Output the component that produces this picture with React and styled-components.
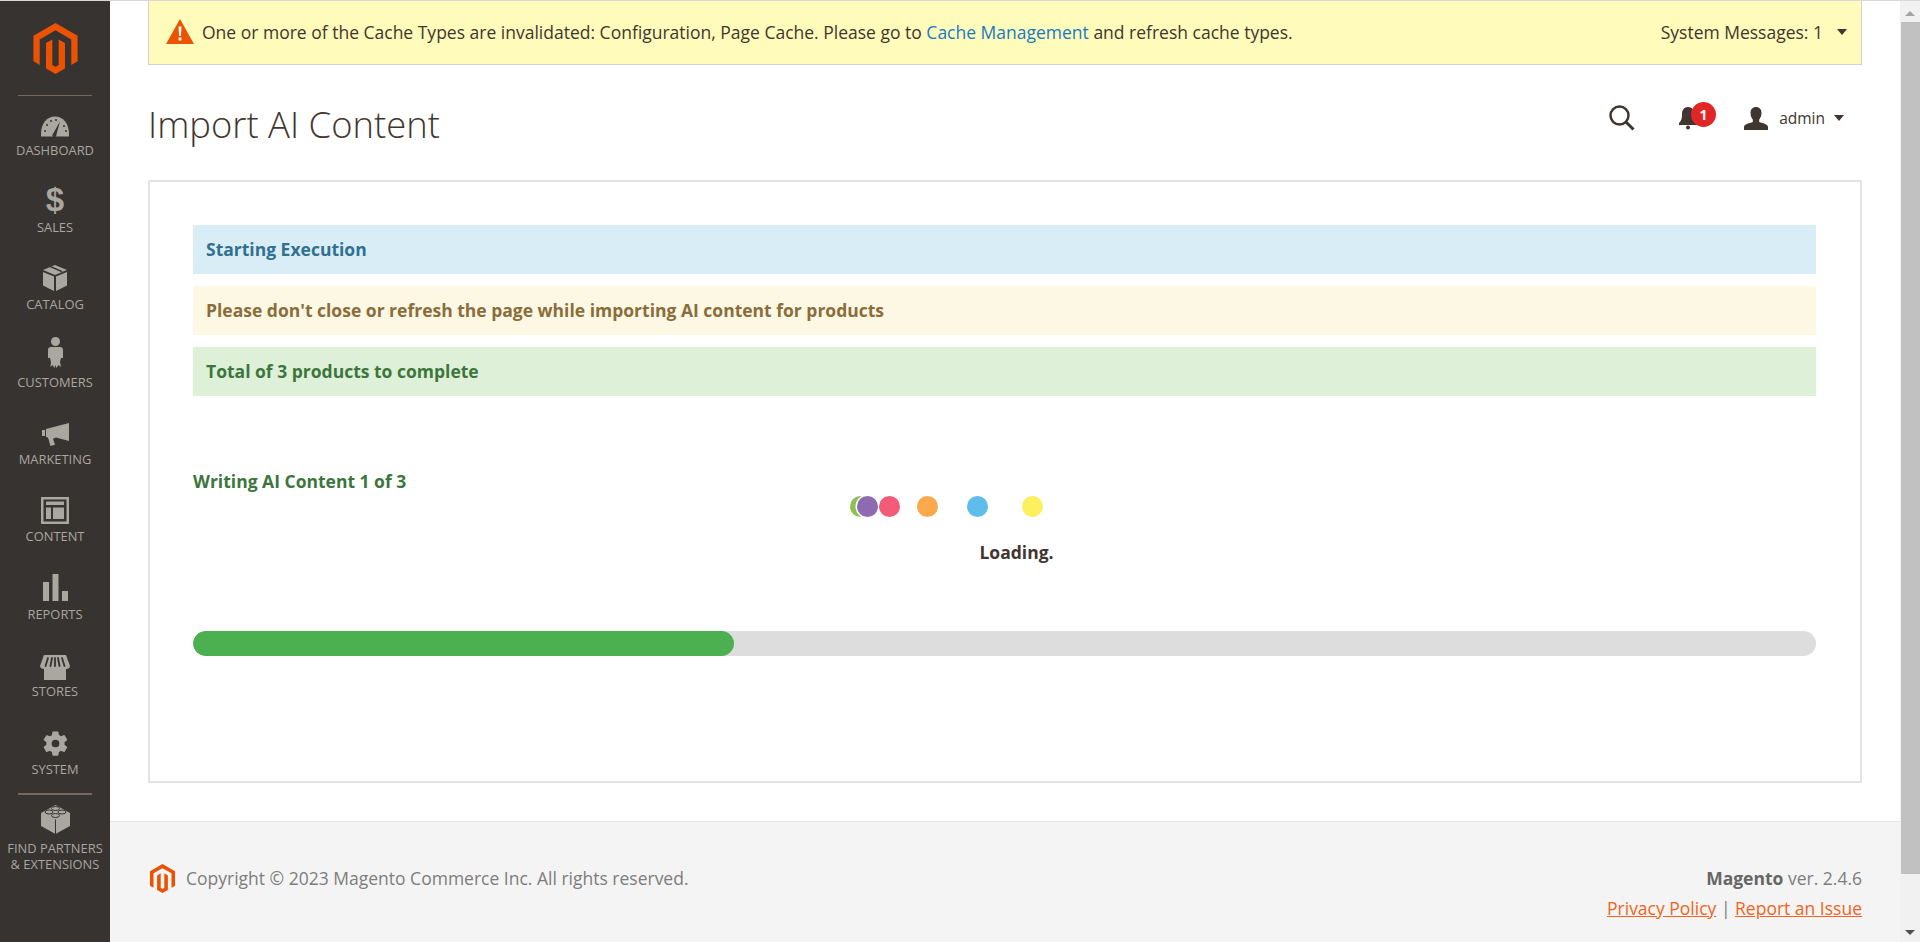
import React from 'react';
import styled, { createGlobalStyle } from 'styled-components';
import { SiMagento } from 'react-icons/si';

const iconColor = '#aaa6a0';
const sidebarColor = '#373330';

const GlobalStyle = createGlobalStyle`
  html, body {
    margin: 0;
    padding: 0;
    height: 100%;
    overflow: hidden;
    background: #fff;
    font-family: "Open Sans", "Noto Sans", sans-serif;
  }
`;

const Page = styled.div`
  display: flex;
  height: 942px;
  box-sizing: border-box;
  border-top: 1px solid #d9d9d9;
`;

/* sidebar */
const Sidebar = styled.nav`
  flex: 0 0 110px;
  background: ${sidebarColor};
  display: flex;
  flex-direction: column;
`;
const LogoBox = styled.div`
  height: 94px;
  display: flex;
  align-items: flex-start;
  justify-content: center;
  padding-top: 22px;
  box-sizing: border-box;
  color: #eb5202;
  font-size: 51px;
  line-height: 0;
`;
const Divider = styled.div`
  height: ${p => p.$thick}px;
  margin: 0 18px;
  background: #736963;
  flex: none;
`;
const NavItem = styled.a`
  height: 77.4px;
  flex: none;
  box-sizing: border-box;
  padding-top: 11.5px;
  display: flex;
  flex-direction: column;
  align-items: center;
  color: ${iconColor};
  font-size: 12.9px;
  line-height: 16px;
  text-align: center;
  white-space: nowrap;
`;
const NavIcon = styled.div`
  height: 34px;
  margin-top: ${p => p.$shift}px;
  margin-bottom: ${p => -p.$shift}px;
  display: flex;
  align-items: center;
  justify-content: center;
  flex: none;
  svg { fill: ${iconColor}; display: block; }
`;
const DollarGlyph = styled.span`
  font-family: "Liberation Sans", sans-serif;
  font-weight: 700;
  font-size: 33px;
  line-height: 34px;
  color: ${iconColor};
`;

/* main column */
const Main = styled.div`
  flex: 1;
  min-width: 0;
  display: flex;
  flex-direction: column;
`;
const Content = styled.div`
  flex: 1;
  padding: 0 38px;
  display: flex;
  flex-direction: column;
`;
const Notice = styled.div`
  height: 64px;
  box-sizing: border-box;
  background: #fffbbb;
  border: 1px solid #d1d1d1;
  border-top: none;
  display: flex;
  align-items: center;
  padding: 0 14px 2px 17px;
  font-size: 17.5px;
  color: #41362f;
  flex: none;
`;
const NoticeText = styled.div`
  flex: 1;
  margin-left: 8px;
  a { color: #1979c3; text-decoration: none; }
`;
const NoticeToggle = styled.div`
  display: flex;
  align-items: center;
  gap: 14px;
`;
const Caret = styled.span`
  width: 0;
  height: 0;
  border-style: solid;
  border-width: 6px 5px 0;
  border-color: #41362f transparent transparent;
`;
const Header = styled.header`
  height: 115px;
  flex: none;
  display: flex;
  align-items: center;
  justify-content: space-between;
`;
const Title = styled.h1`
  margin: 3px 0 0;
  font-weight: 300;
  font-size: 36.4px;
  line-height: 44px;
  color: #41362f;
`;
const Actions = styled.div`
  display: flex;
  align-items: center;
  margin: 0 18px 9px 0;
  color: #41362f;
`;
const Bell = styled.div`
  position: relative;
  margin-left: 43px;
  width: 18px;
  height: 24px;
  svg { display: block; }
`;
const Badge = styled.span`
  position: absolute;
  left: 13px;
  top: -4px;
  width: 25px;
  height: 25px;
  border-radius: 50%;
  background: #e22626;
  color: #fff;
  font-size: 14px;
  font-weight: 700;
  line-height: 25px;
  text-align: center;
`;
const UserIcon = styled.svg`
  margin-left: 48px;
  fill: #41362f;
`;
const UserName = styled.span`
  margin-left: 11px;
  font-size: 15.5px;
  margin-right: 9px;
`;

/* progress panel */
const Panel = styled.section`
  height: 603px;
  flex: none;
  box-sizing: border-box;
  border: 2px solid #e3e3e3;
  padding: 43px 44px 0 43px;
  display: flex;
  flex-direction: column;
`;
const Alert = styled.div`
  height: 49px;
  flex: none;
  box-sizing: border-box;
  display: flex;
  align-items: center;
  padding: 0 0 2px 13px;
  margin-bottom: 12px;
  font-size: 17.5px;
  font-weight: 700;
  color: ${p => p.$color};
  background: ${p => p.$bg};
`;
const Writing = styled.div`
  margin-top: 61px;
  font-size: 17.5px;
  font-weight: 700;
  line-height: 24px;
  color: #3c763d;
`;
const Dots = styled.div`
  display: flex;
  margin: 3px 0 0 657px;
`;
const Dot = styled.span`
  width: 21px;
  height: 21px;
  flex: none;
  border-radius: 50%;
  background: ${p => p.$color};
  margin-left: ${p => p.$gap}px;
  box-shadow: ${p => (p.$ring ? '0 0 0 1.5px #fff' : 'none')};
`;
const Loading = styled.div`
  margin-top: 23px;
  padding-left: 24px;
  text-align: center;
  font-size: 17.5px;
  font-weight: 700;
  line-height: 24px;
  color: #41362f;
`;
const Track = styled.div`
  margin-top: 67px;
  height: 25px;
  border-radius: 13px;
  background: #ddd;
  overflow: hidden;
`;
const Fill = styled.div`
  width: 541px;
  height: 100%;
  border-radius: 13px;
  background: #4caf50;
`;

/* footer */
const Footer = styled.footer`
  height: 121px;
  flex: none;
  box-sizing: border-box;
  background: #f4f4f4;
  border-top: 1px solid #e3e3e3;
  padding: 40.5px 38px 0;
  display: flex;
  justify-content: space-between;
  font-size: 17.5px;
  line-height: 30px;
  color: #7d7d7d;
`;
const Copyright = styled.div`
  display: flex;
  align-items: flex-start;
  gap: 9px;
  svg { color: #eb5202; display: block; margin-top: 1px; }
`;
const FooterRight = styled.div`
  text-align: right;
  b { font-weight: 700; color: #666; }
  a { color: #f26322; text-decoration: underline; }
`;

/* browser scrollbar */
const Scrollbar = styled.div`
  flex: 0 0 20px;
  background: #f1f1f1;
  display: flex;
  flex-direction: column;
  align-items: center;
`;
const ScrollArrow = styled.div`
  height: 21px;
  flex: none;
  box-sizing: border-box;
  display: flex;
  align-items: flex-start;
  padding-top: ${p => (p.$down ? 9 : 10)}px;
  &::before {
    content: '';
    border-style: solid;
    border-color: transparent;
    border-width: ${p => (p.$down ? '5px 5px 0' : '0 5px 5px')};
    border-top-color: ${p => (p.$down ? '#505050' : 'transparent')};
    border-bottom-color: ${p => (p.$down ? 'transparent' : '#a3a3a3')};
  }
`;
const Thumb = styled.div`
  width: 19px;
  height: 852px;
  flex: none;
  background: #c1c1c1;
  margin-bottom: auto;
  margin-left: 1px;
`;

const GaugeIcon = () => (
  <svg width="28" height="21" viewBox="0 0 28 21">
    <path d="M0 20.5V18C0 7.5 6 .5 14 .5S28 7.5 28 18v2.5z" />
    <path d="M12.2 17.6 19 5.5l-3.6 13.3a2 2 0 1 1-3.2-1.2z" fill={sidebarColor} />
    <g fill={sidebarColor}>
      <circle cx="4" cy="15" r="1" />
      <circle cx="6" cy="9" r="1" />
      <circle cx="10" cy="5" r="1" />
      <circle cx="15" cy="4" r="1" />
      <circle cx="23" cy="10" r="1" />
      <circle cx="25" cy="15" r="1" />
    </g>
  </svg>
);

const BoxIcon = () => (
  <svg width="24" height="26" viewBox="0 0 24 26">
    <path d="M12 0 24 5 12 10 0 5z" />
    <path d="M0 7 11 11.5V26L0 20.5z" />
    <path d="M24 7 13 11.5V26l11-5.500z" />
    <path d="M6.500 2 18 7l2-.8L8.500 1.200z" fill={sidebarColor} />
  </svg>
);

const PersonIcon = () => (
  <svg width="15" height="31" viewBox="0 0 15 31">
    <circle cx="7.500" cy="4.500" r="4.500" />
    <path d="M3 10h9c2 0 3 1 3 3v8h-2l-1 4 1 5-2.500-2-2 3-1-3-1 3-2-3L2.500 30 3 25l-1-4H0v-8c0-2 1-3 3-3z" />
  </svg>
);

const MegaphoneIcon = () => (
  <svg width="27" height="23" viewBox="0 0 27 23">
    <path d="M0 7h3v6H0z" />
    <path d="M4 6 27 0v18l-13-3.500-3 1.200 2 6L8.500 23 6 14.500 4 14z" />
  </svg>
);

const ContentIcon = () => (
  <svg width="28" height="27" viewBox="0 0 28 27">
    <path fillRule="evenodd" d="M0 0h28v27H0zM2.500 2.500v22h23v-22z" />
    <path d="M5 4.500h18v3.500H5zM5 10.500h5V22H5zM12 10.500h11V22H12z" />
  </svg>
);

const BarsIcon = () => (
  <svg width="25" height="27" viewBox="0 0 25 27">
    <path d="M0 8h6v19H0zM9.500 0h6v27h-6zM19 17h6v10h-6z" />
  </svg>
);

const StoreIcon = () => (
  <svg width="30" height="25" viewBox="0 0 30 25">
    <path d="M4 0h22l4 11c0 2-2 3-3.500 3l-.5 0V25H4V14C2 14 0 13 0 11z" />
    <path
      d="M8 3 5.500 11M12 3l-1.500 8M15 3v8M18 3l1.500 8M22 3l2.500 8"
      stroke={sidebarColor}
      strokeWidth="1.800"
      strokeLinecap="round"
    />
  </svg>
);

const GearIcon = () => (
  <svg width="29" height="29" viewBox="0 0 24 24">
    <path d="M19.400 13c.05-.33.1-.66.1-1s-.05-.67-.1-1l2.100-1.650a.5.5 0 0 0 .12-.64l-2-3.460a.5.5 0 0 0-.61-.22l-2.490 1a7.300 7.300 0 0 0-1.730-1l-.38-2.650A.49.49 0 0 0 13.920 2h-4a.49.49 0 0 0-.49.42l-.38 2.650c-.61.25-1.170.59-1.690 1l-2.490-1a.5.5 0 0 0-.61.22l-2 3.460a.5.5 0 0 0 .12.64L4.500 11c-.05.33-.08.66-.08 1s.03.67.08 1l-2.110 1.650a.5.5 0 0 0-.12.64l2 3.460c.12.22.39.3.61.22l2.490-1c.52.4 1.080.74 1.690 1l.38 2.650c.05.24.24.42.49.42h4c.25 0 .45-.18.49-.42l.38-2.650c.61-.26 1.170-.6 1.690-1l2.490 1c.23.08.49 0 .61-.22l2-3.460a.5.5 0 0 0-.12-.64zM12 15.200a3.200 3.200 0 1 1 0-6.400 3.200 3.200 0 0 1 0 6.400z" />
  </svg>
);

const BlocksIcon = () => (
  <svg width="29" height="29" viewBox="0 0 29 29">
    <path d="M14.500 0 29 8v13l-14.500 8L0 21V8z" />
    <path d="M14.500 14.500v14.500" stroke={sidebarColor} strokeWidth="1" fill="none" />
    <g fill="#aaa6a0" stroke={sidebarColor} strokeWidth="1">
      <ellipse cx="14.500" cy="3.500" rx="4" ry="2" />
      <ellipse cx="8" cy="7" rx="4" ry="2" />
      <ellipse cx="21" cy="7" rx="4" ry="2" />
      <ellipse cx="14.500" cy="10.500" rx="4" ry="2" />
    </g>
  </svg>
);

const navItems = [
  { label: 'DASHBOARD', shift: 1.5, icon: <GaugeIcon /> },
  { label: 'SALES', shift: -1.5, icon: <DollarGlyph>$</DollarGlyph> },
  { label: 'CATALOG', shift: -1, icon: <BoxIcon /> },
  { label: 'CUSTOMERS', shift: -4, icon: <PersonIcon /> },
  { label: 'MARKETING', shift: 0.5, icon: <MegaphoneIcon /> },
  { label: 'CONTENT', shift: -0.5, icon: <ContentIcon /> },
  { label: 'REPORTS', shift: -1, icon: <BarsIcon /> },
  { label: 'STORES', shift: 1.5, icon: <StoreIcon /> },
  { label: 'SYSTEM', shift: 0, icon: <GearIcon /> },
];

const dots = [
  { color: '#8cc152', gap: 0 },
  { color: '#8e6bb0', gap: -14, ring: true },
  { color: '#f25c78', gap: 1 },
  { color: '#fba94c', gap: 17 },
  { color: '#5fbdec', gap: 29 },
  { color: '#fdf05e', gap: 34 },
];

const App = () => (
  <>
    <GlobalStyle />
    <Page>
      <Sidebar>
        <LogoBox>
          <SiMagento />
        </LogoBox>
        <Divider $thick={1} />
        {navItems.map(item => (
          <NavItem key={item.label}>
            <NavIcon $shift={item.shift}>{item.icon}</NavIcon>
            {item.label}
          </NavItem>
        ))}
        <Divider $thick={2} />
        <NavItem>
          <NavIcon $shift={-4}>
            <BlocksIcon />
          </NavIcon>
          FIND PARTNERS
          <br />& EXTENSIONS
        </NavItem>
      </Sidebar>

      <Main>
        <Content>
          <Notice>
            <svg width="28" height="25" viewBox="0 0 28 25">
              <path d="M14 0 28 25H0z" fill="#eb5202" />
              <path d="M12.500 7.500h3l-.6 9.500h-1.800zM12.600 18.500h2.800v3h-2.800z" fill="#fff" />
            </svg>
            <NoticeText>
              One or more of the Cache Types are invalidated: Configuration, Page Cache. Please go
              to <a>Cache Management</a> and refresh cache types.
            </NoticeText>
            <NoticeToggle>
              System Messages: 1
              <Caret />
            </NoticeToggle>
          </Notice>

          <Header>
            <Title>Import AI Content</Title>
            <Actions>
              <svg width="26" height="26" viewBox="0 0 26 26" fill="none" stroke="#41362f">
                <circle cx="10.500" cy="10.500" r="9" strokeWidth="2.500" />
                <path d="M17 17l7.500 7.500" strokeWidth="3" />
              </svg>
              <Bell>
                <svg width="20" height="24" viewBox="0 0 20 24" fill="#41362f">
                  <path d="M10 1c4 0 6 3 6 7 0 5 1 7 3 9v2H1v-2c2-2 3-4 3-9 0-4 2-7 6-7z" />
                  <circle cx="10" cy="21.500" r="2" />
                </svg>
                <Badge>1</Badge>
              </Bell>
              <UserIcon width="24" height="23" viewBox="0 0 24 23">
                <path d="M12 0c3.500 0 5.500 2.500 5.500 6 0 3-1 5-2.300 6.500v2.500c3 1.200 8.800 2 8.800 5v3H0v-3c0-3 5.800-3.800 8.800-5v-2.500C7.500 11 6.500 9 6.500 6c0-3.500 2-6 5.500-6z" />
              </UserIcon>
              <UserName>admin</UserName>
              <Caret />
            </Actions>
          </Header>

          <Panel>
            <Alert $bg="#d9edf7" $color="#31708f">Starting Execution</Alert>
            <Alert $bg="#fcf8e3" $color="#8a6d3b">
              Please don't close or refresh the page while importing AI content for products
            </Alert>
            <Alert $bg="#dff0d8" $color="#3c763d">Total of 3 products to complete</Alert>
            <Writing>Writing AI Content 1 of 3</Writing>
            <Dots>
              {dots.map(dot => (
                <Dot key={dot.color} $color={dot.color} $gap={dot.gap} $ring={dot.ring} />
              ))}
            </Dots>
            <Loading>Loading.</Loading>
            <Track>
              <Fill />
            </Track>
          </Panel>
        </Content>

        <Footer>
          <Copyright>
            <SiMagento size={29} />
            Copyright © 2023 Magento Commerce Inc. All rights reserved.
          </Copyright>
          <FooterRight>
            <div>
              <b>Magento</b> ver. 2.4.6
            </div>
            <div>
              <a>Privacy Policy</a> | <a>Report an Issue</a>
            </div>
          </FooterRight>
        </Footer>
      </Main>

      <Scrollbar>
        <ScrollArrow />
        <Thumb />
        <ScrollArrow $down />
      </Scrollbar>
    </Page>
  </>
);

export default App;
